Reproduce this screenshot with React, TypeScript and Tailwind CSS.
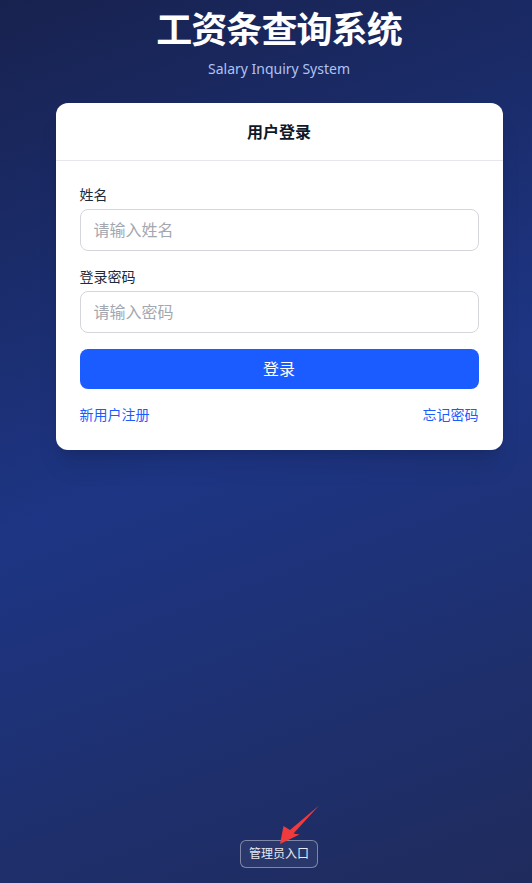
export default function App() {
  return (
    <div
      className="relative min-h-screen w-full flex flex-col items-center pl-[26px]"
      style={{
        background: "linear-gradient(160deg, #18224f 0%, #1d3584 50%, #1f2b5c 100%)",
        fontFamily: '"Noto Sans", "Noto Sans CJK SC", sans-serif',
      }}
    >
      {/* Header */}
      <h1 className="pt-[10px] text-[36px] leading-[40px] font-bold text-white tracking-tight">
        工资条查询系统
      </h1>
      <p className="mt-[9px] text-sm leading-5 text-[#b0c2f2]">Salary Inquiry System</p>

      {/* Login card */}
      <div className="mt-6 w-[447px] bg-white rounded-xl shadow-xl overflow-hidden">
        <div className="h-[58px] flex items-center justify-center border-b border-gray-200">
          <h2 className="text-base font-bold text-gray-900">用户登录</h2>
        </div>
        <div className="px-6 pt-6 pb-[25px]">
          <label className="block text-sm leading-5 text-gray-800">姓名</label>
          <input
            className="mt-1 w-full h-[42px] rounded-lg border border-[#d4d6dc] px-[13px] text-base placeholder:text-[#a3a7b0] outline-none"
            placeholder="请输入姓名"
          />
          <label className="mt-4 block text-sm leading-5 text-gray-800">登录密码</label>
          <input
            type="password"
            className="mt-1 w-full h-[42px] rounded-lg border border-[#d4d6dc] px-[13px] text-base placeholder:text-[#a3a7b0] outline-none"
            placeholder="请输入密码"
          />
          <button className="mt-4 w-full h-10 rounded-lg bg-[#1a5cff] text-white text-base">
            登录
          </button>
          <div className="mt-4 flex justify-between text-sm leading-5 text-[#1a5cff]">
            <a>新用户注册</a>
            <a>忘记密码</a>
          </div>
        </div>
      </div>

      <div className="flex-1" />

      {/* Admin entry */}
      <div className="relative mb-[15px]">
        <button className="h-7 px-[8px] rounded-md border border-white/40 bg-white/5 text-xs text-white/90">
          管理员入口
        </button>
        <svg
          className="absolute left-[38px] top-[-36px] w-[44px] h-[42px]"
          viewBox="278 804 44 42"
        >
          <polygon
            points="280,844 283.5,826 290,830 319,805.5 293.5,833.5 299.5,834.5"
            fill="#f03a3c"
          />
        </svg>
      </div>
    </div>
  );
}
